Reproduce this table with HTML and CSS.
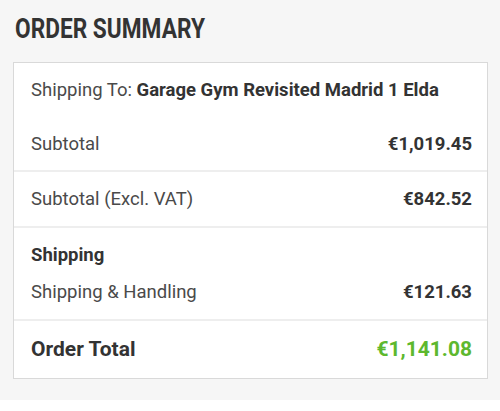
FILE: index.html
```html
<!DOCTYPE html>
<html lang="en">
<head>
<meta charset="utf-8">
<title>Order Summary</title>
<link rel="stylesheet" href="styles.css">
</head>
<body>
<div class="summary">
  <h2 class="summary-title"><span>ORDER SUMMARY</span></h2>
  <div class="card">
    <div class="row row-ship-to">
      <span class="label">Shipping To: <strong>Garage Gym Revisited Madrid 1 Elda</strong></span>
    </div>
    <div class="row row-plain">
      <span class="label">Subtotal</span>
      <span class="value">€1,019.45</span>
    </div>
    <div class="row">
      <span class="label">Subtotal (Excl. VAT)</span>
      <span class="value">€842.52</span>
    </div>
    <div class="row row-group">
      <div class="group-title">Shipping</div>
      <div class="line">
        <span class="label">Shipping &amp; Handling</span>
        <span class="value">€121.63</span>
      </div>
    </div>
    <div class="row row-total">
      <span class="total-label">Order Total</span>
      <span class="total-value">€1,141.08</span>
    </div>
  </div>
</div>
</body>
</html>
```
FILE: styles.css
```css
html, body {
  margin: 0;
  padding: 0;
  background: #ffffff;
}
body {
  font-family: Roboto, "Liberation Sans", sans-serif;
  color: #4a4a4a;
}
.summary {
  background: #f6f6f6;
  height: 400px;
  box-sizing: border-box;
  padding: 12px 12px 0 13px;
}
.summary-title {
  margin: 0 0 16px 2px;
  height: 34px;
  font-size: 27px;
  font-weight: 700;
  line-height: 34px;
  color: #333333;
  white-space: nowrap;
}
.summary-title span {
  display: inline-block;
  transform: scaleX(0.84);
  transform-origin: left center;
}
.card {
  background: #ffffff;
  border: 1px solid #d9d9d9;
}
.row {
  display: flex;
  justify-content: space-between;
  align-items: center;
  padding: 16px 15px 16px 17px;
  line-height: 22px;
  font-size: 18.5px;
  border-top: 2px solid #eeeeee;
}
.row-ship-to,
.row-plain {
  border-top: none;
}
.row-plain {
  padding-bottom: 15px;
}
.label strong {
  font-weight: 700;
  color: #333333;
}
.value {
  font-weight: 700;
  color: #333333;
}
.row-group {
  flex-direction: column;
  align-items: stretch;
  gap: 15px;
}
.group-title {
  font-weight: 700;
  color: #333333;
}
.line {
  display: flex;
  justify-content: space-between;
}
.row-total {
  line-height: 23px;
  padding-top: 17px;
  padding-bottom: 17px;
}
.total-label {
  font-size: 21px;
  font-weight: 700;
  color: #333333;
}
.total-value {
  font-size: 21px;
  font-weight: 700;
  color: #5db82e;
}
```
